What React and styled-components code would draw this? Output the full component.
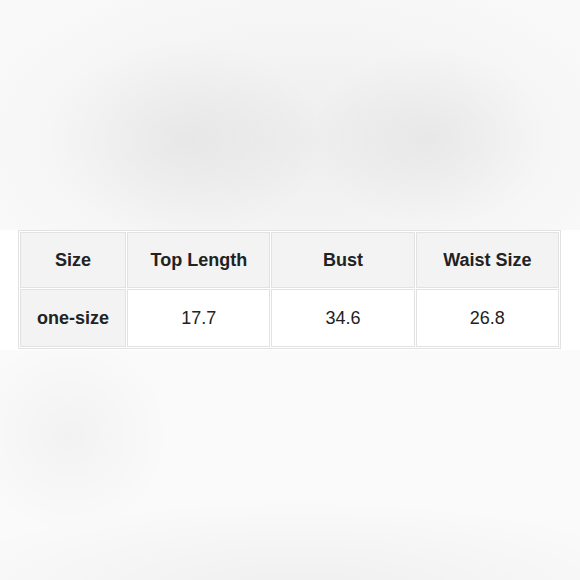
import React from 'react';
import styled, { createGlobalStyle } from 'styled-components';

const GlobalStyle = createGlobalStyle`
  html, body {
    margin: 0;
    padding: 0;
    background: #f7f7f7;
  }
  body {
    font-family: "Liberation Sans", Arial, sans-serif;
  }
`;

const Page = styled.div`
  width: 580px;
  height: 580px;
  display: flex;
  flex-direction: column;
  overflow: hidden;
`;

const TopBlur = styled.div`
  height: 230px;
  background:
    radial-gradient(ellipse 140px 100px at 185px 140px, rgba(0,0,0,0.045), rgba(0,0,0,0) 100%),
    radial-gradient(ellipse 120px 90px at 430px 138px, rgba(0,0,0,0.045), rgba(0,0,0,0) 100%),
    radial-gradient(ellipse 340px 180px at 300px 140px, #eeeeee, #f9f9f9 100%);
`;

const Band = styled.div`
  height: 120px;
  background: #ffffff;
  padding-left: 18px;
  box-sizing: border-box;
`;

const BottomBlur = styled.div`
  flex: 1;
  background:
    radial-gradient(ellipse 100px 100px at 70px 85px, rgba(0,0,0,0.03), rgba(0,0,0,0) 100%),
    radial-gradient(ellipse 380px 90px at 300px 240px, rgba(0,0,0,0.045), rgba(0,0,0,0) 100%),
    #fafafa;
`;

const Table = styled.table`
  width: 543px;
  border-collapse: separate;
  border-spacing: 1px;
  background: #ffffff;
  border: 1px solid #e2e2e2;
  table-layout: fixed;
  margin: 0;
`;

const Cell = styled.td`
  height: ${(p) => (p.$head ? '54px' : '56px')};
  border: 1px solid #e2e2e2;
  background: ${(p) => (p.$shade ? '#f3f3f3' : '#ffffff')};
  color: #222222;
  font-size: 18px;
  font-weight: ${(p) => (p.$bold ? 700 : 400)};
  text-align: center;
  vertical-align: middle;
  padding: 0;
`;

const cols = ['Size', 'Top Length', 'Bust', 'Waist Size'];
const values = ['one-size', '17.7', '34.6', '26.8'];
const widths = [106, 143, 143, 143];

export default function App() {
  return (
    <>
      <GlobalStyle />
      <Page>
        <TopBlur />
        <Band>
          <Table>
            <colgroup>
              {widths.map((w, i) => (
                <col key={i} style={{ width: w }} />
              ))}
            </colgroup>
            <tbody>
              <tr>
                {cols.map((c) => (
                  <Cell key={c} $head $shade $bold>
                    {c}
                  </Cell>
                ))}
              </tr>
              <tr>
                {values.map((v, i) => (
                  <Cell key={v} $shade={i === 0} $bold={i === 0}>
                    {v}
                  </Cell>
                ))}
              </tr>
            </tbody>
          </Table>
        </Band>
        <BottomBlur />
      </Page>
    </>
  );
}
